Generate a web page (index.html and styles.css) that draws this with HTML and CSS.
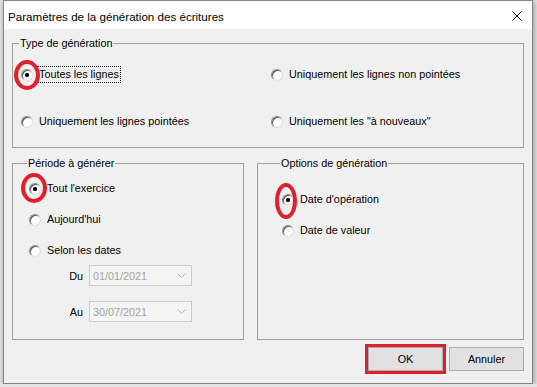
FILE: index.html
```html
<!DOCTYPE html>
<html lang="fr">
<head>
    <meta charset="UTF-8">
    <meta name="viewport" content="width=device-width, initial-scale=1.0">
    <link rel="stylesheet" href="styles.css">
</head>
<body>

<!-- Dialog window -->
<div class="window">
    <div class="titlebar">
        <span class="title">Paramètres de la génération des écritures</span>
        <svg class="close" width="10" height="10" viewBox="0 0 10 10">
            <path d="M0.5 0.5 L9.5 9.5 M9.5 0.5 L0.5 9.5" stroke="#000" stroke-width="1" fill="none"/>
        </svg>
    </div>

    <div class="content">
        <!-- Type de génération -->
        <fieldset class="group group-type">
            <legend>Type de génération</legend>
            <div class="type-grid">
                <label class="option">
                    <span class="radio checked"></span>
                    <span class="text focus">Toutes les lignes</span>
                    <span class="mark mark-type"></span>
                </label>
                <label class="option">
                    <span class="radio"></span>
                    <span class="text">Uniquement les lignes non pointées</span>
                </label>
                <label class="option">
                    <span class="radio"></span>
                    <span class="text">Uniquement les lignes pointées</span>
                </label>
                <label class="option">
                    <span class="radio"></span>
                    <span class="text">Uniquement les "à nouveaux"</span>
                </label>
            </div>
        </fieldset>

        <div class="lower">
            <!-- Période à générer -->
            <fieldset class="group group-period">
                <legend>Période à générer</legend>
                <div class="stack">
                    <label class="option">
                        <span class="radio checked"></span>
                        <span class="text">Tout l'exercice</span>
                        <span class="mark mark-period"></span>
                    </label>
                    <label class="option">
                        <span class="radio"></span>
                        <span class="text">Aujourd'hui</span>
                    </label>
                    <label class="option">
                        <span class="radio"></span>
                        <span class="text">Selon les dates</span>
                    </label>
                </div>
                <div class="dates">
                    <div class="date-row">
                        <span class="date-label">Du</span>
                        <div class="combo">
                            <span>01/01/2021</span>
                            <svg width="9" height="5" viewBox="0 0 9 5"><polyline points="0.5,0.5 4.5,4.5 8.5,0.5" stroke="#b4b4b4" fill="none"/></svg>
                        </div>
                    </div>
                    <div class="date-row">
                        <span class="date-label">Au</span>
                        <div class="combo">
                            <span>30/07/2021</span>
                            <svg width="9" height="5" viewBox="0 0 9 5"><polyline points="0.5,0.5 4.5,4.5 8.5,0.5" stroke="#b4b4b4" fill="none"/></svg>
                        </div>
                    </div>
                </div>
            </fieldset>

            <!-- Options de génération -->
            <fieldset class="group group-options">
                <legend>Options de génération</legend>
                <div class="stack">
                    <label class="option">
                        <span class="radio checked"></span>
                        <span class="text">Date d'opération</span>
                        <span class="mark mark-options"></span>
                    </label>
                    <label class="option">
                        <span class="radio"></span>
                        <span class="text">Date de valeur</span>
                    </label>
                </div>
            </fieldset>
        </div>

        <div class="actions">
            <button class="btn btn-ok">OK</button>
            <button class="btn">Annuler</button>
        </div>
    </div>
</div>

</body>
</html>
```

FILE: styles.css
```css
body {
  margin: 0;
  background-color: #e4e4e4;
  font-family: "Liberation Sans", Arial, sans-serif;
  font-size: 10.8px;
  color: #000;
}
.window {
  box-sizing: border-box;
  width: 530px;
  height: 384px;
  margin-left: 3px;
  border: 1px solid #858585;
  background-color: #f0f0f0;
  box-shadow: 1px 1px 6px rgba(0, 0, 0, 0.35);
}
.titlebar {
  height: 28px;
  background-color: #fff;
  display: flex;
  align-items: center;
  justify-content: space-between;
  padding: 0 10px 0 4px;
}
.title {
  font-size: 11.6px;
  padding-top: 2px;
}
.close {
  display: block;
  margin-top: 2px;
}
.content {
  padding: 7px 8px 0 8px;
}

/* group boxes */
.group {
  margin: 0;
  min-width: 0;
  border: 1px solid #a0a0a0;
}
.group legend {
  margin-left: -2px;
  padding: 0 1px;
  line-height: 14px;
}
.group-type {
  padding: 16px 8px 17px 8px;
}
.type-grid {
  display: grid;
  grid-template-columns: 250px 1fr;
  row-gap: 30px;
}
.lower {
  display: grid;
  grid-template-columns: 232px 267px;
  column-gap: 13px;
  margin-top: 8px;
}
.group-period {
  padding: 10px 8px 17px 16px;
}
.group-options {
  padding: 21px 8px 10px 24px;
}
.stack {
  display: flex;
  flex-direction: column;
  gap: 14px;
  align-items: flex-start;
}

/* radio options */
.option {
  position: relative;
  display: flex;
  align-items: center;
  height: 17px;
  justify-self: start;
}
.radio {
  box-sizing: border-box;
  width: 12px;
  height: 12px;
  border-radius: 50%;
  border: 1px solid;
  border-color: #8a8a8a #dcdcdc #dcdcdc #8a8a8a;
  background-color: #fff;
  box-shadow: inset 1px 1px 0 #5a5a5a;
}
.radio.checked {
  background: radial-gradient(circle, #000 0 1.8px, #fff 2.4px);
}
.text {
  margin-left: 4px;
  padding: 0 1px;
  line-height: 15px;
  border: 1px dotted transparent;
}
.text.focus {
  border-color: #000;
}

/* red annotations */
.mark {
  position: absolute;
  box-sizing: border-box;
  border: 4px solid #e1202b;
  border-radius: 50%;
}
.mark-type {
  left: -7px;
  top: -6px;
  width: 26px;
  height: 30px;
}
.mark-period {
  left: -8px;
  top: -7px;
  width: 26px;
  height: 30px;
}
.mark-options {
  left: -7px;
  top: -8px;
  width: 22px;
  height: 36px;
}

/* date pickers */
.dates {
  display: flex;
  flex-direction: column;
  gap: 15px;
  margin: 6px 0 0 39px;
}
.date-row {
  display: flex;
  align-items: center;
  gap: 6px;
}
.date-label {
  width: 15px;
  text-align: right;
}
.combo {
  box-sizing: border-box;
  width: 103px;
  height: 21px;
  border: 1px solid #cccccc;
  background-color: #f4f4f4;
  color: #a3a3a3;
  display: flex;
  align-items: center;
  justify-content: space-between;
  padding: 0 5px 0 3px;
}
.combo svg {
  display: block;
}

/* buttons */
.actions {
  display: flex;
  justify-content: flex-end;
  gap: 6px;
  margin-top: 7px;
}
.btn {
  box-sizing: border-box;
  width: 75px;
  height: 24px;
  border: 1px solid #adadad;
  background-color: #e1e1e1;
  font-family: "Liberation Sans", Arial, sans-serif;
  font-size: 10.8px;
  color: #000;
  padding: 0;
}
.btn-ok {
  outline: 3px solid #e1202b;
}
```
